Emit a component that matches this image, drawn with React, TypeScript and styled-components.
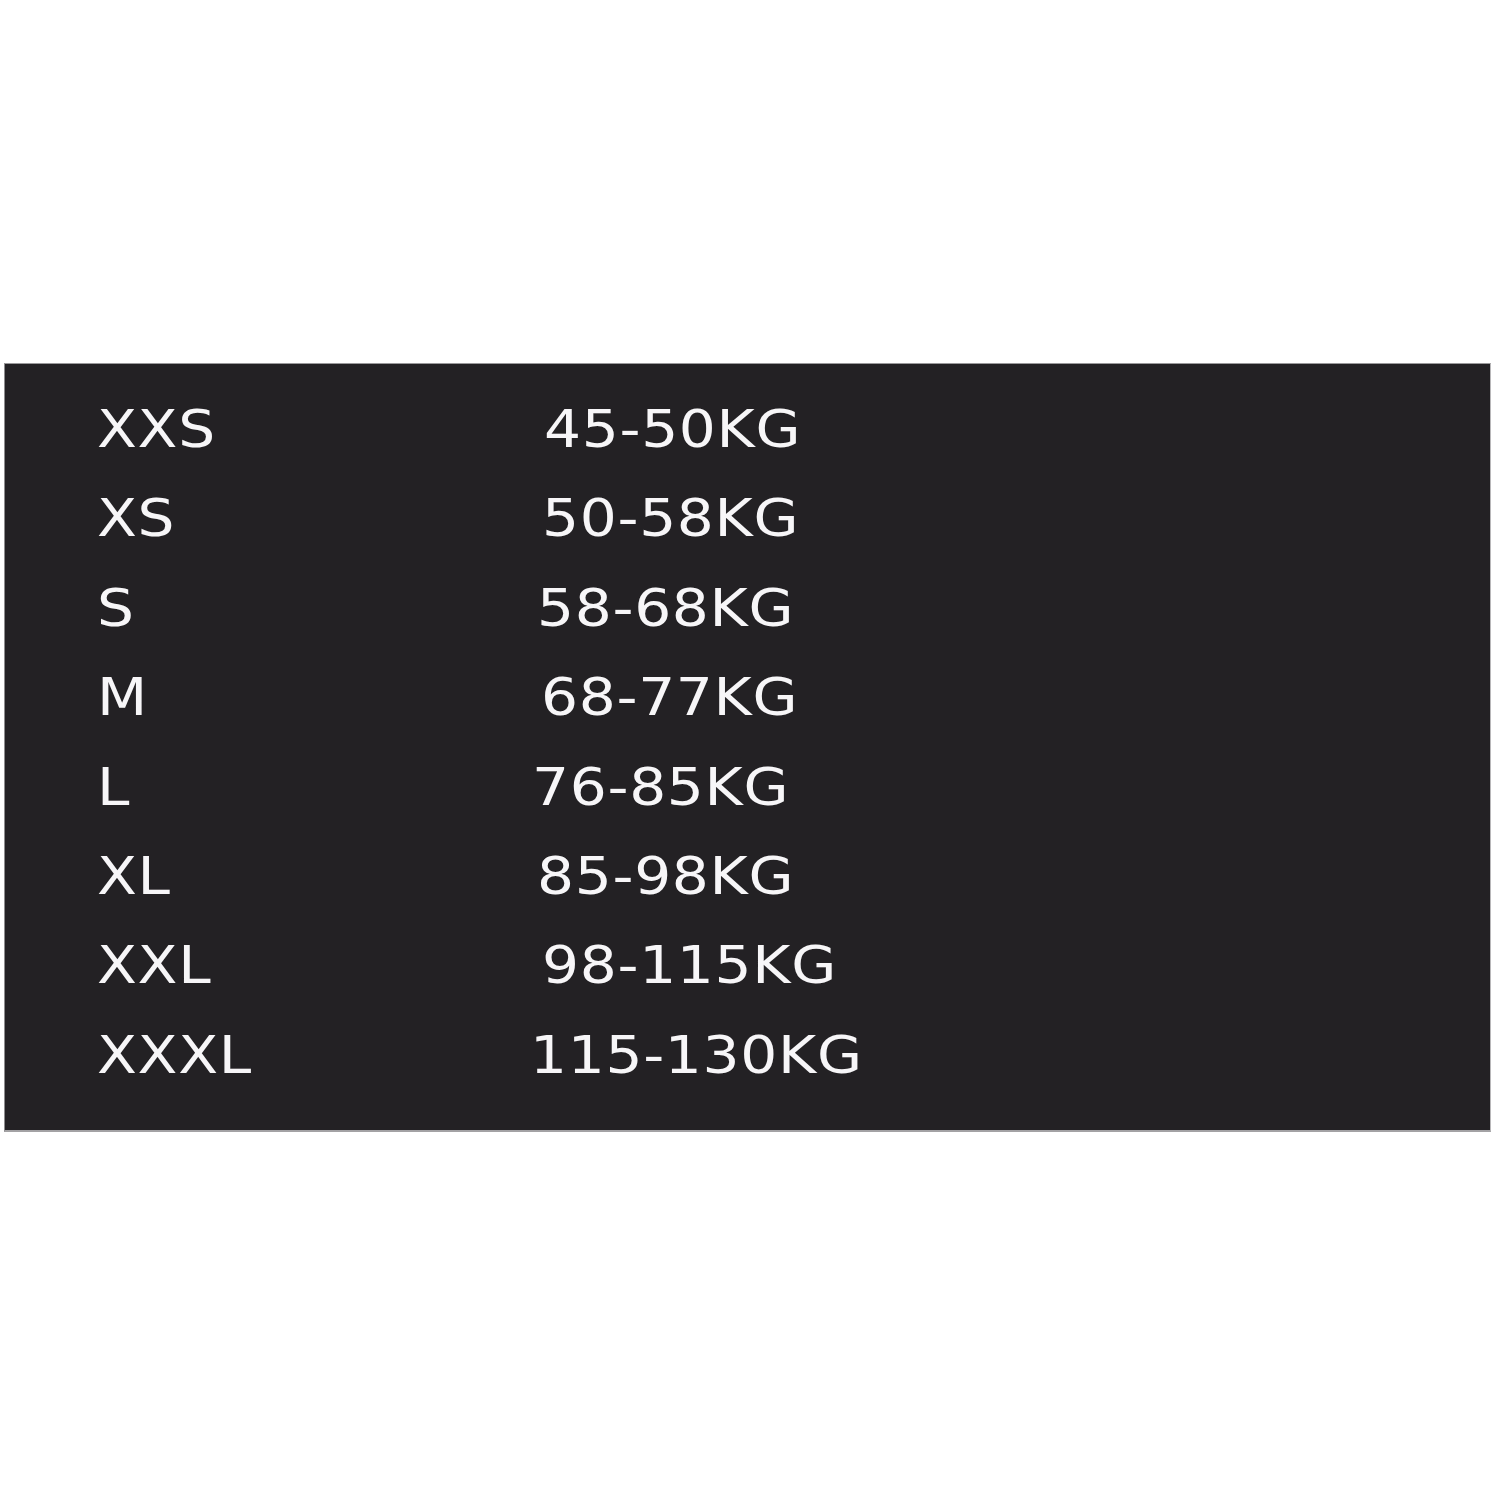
import React from 'react'
import styled, { createGlobalStyle } from 'styled-components'

const GlobalStyle = createGlobalStyle`
  html, body {
    margin: 0;
    padding: 0;
    background: #ffffff;
  }
`

const rows = [
  { size: 'XXS', weight: '45-50KG', shift: 14 },
  { size: 'XS', weight: '50-58KG', shift: 12 },
  { size: 'S', weight: '58-68KG', shift: 7 },
  { size: 'M', weight: '68-77KG', shift: 11 },
  { size: 'L', weight: '76-85KG', shift: 2 },
  { size: 'XL', weight: '85-98KG', shift: 7 },
  { size: 'XXL', weight: '98-115KG', shift: 12 },
  { size: 'XXXL', weight: '115-130KG', shift: 0 },
]

const App = () => {
  return (
    <Page>
      <GlobalStyle />
      <Chart>
        {rows.map((r) => (
          <Row key={r.size}>
            <Cell>
              <Label>{r.size}</Label>
            </Cell>
            <Cell $shift={r.shift}>
              <Label>{r.weight}</Label>
            </Cell>
          </Row>
        ))}
      </Chart>
    </Page>
  )
}

export default App

const Page = styled.div`
  width: 1500px;
  height: 1500px;
  padding-top: 363px;
  box-sizing: border-box;
`

const Chart = styled.div`
  margin-left: 4px;
  width: 1487px;
  height: 769px;
  box-sizing: border-box;
  background: #232124;
  border-top: 1px solid #9a999b;
  border-bottom: 2px solid #a3a2a4;
  border-left: 1px solid #8d8c8e;
  border-right: 1px solid #b8b7b9;
  padding: 21px 0 0 92px;
  display: flex;
  flex-direction: column;
`

const Row = styled.div`
  display: grid;
  grid-template-columns: 433px 1fr;
  height: 89.4px;
  line-height: 89.4px;
  font-family: 'DejaVu Sans', Verdana, sans-serif;
  font-size: 52px;
  letter-spacing: 0.6px;
  color: #f7f6f8;
`

const Cell = styled.div<{ $shift?: number }>`
  white-space: nowrap;
  padding-left: ${(p) => p.$shift ?? 0}px;
`

const Label = styled.span`
  display: inline-block;
  transform: scaleX(1.12);
  transform-origin: left center;
`
